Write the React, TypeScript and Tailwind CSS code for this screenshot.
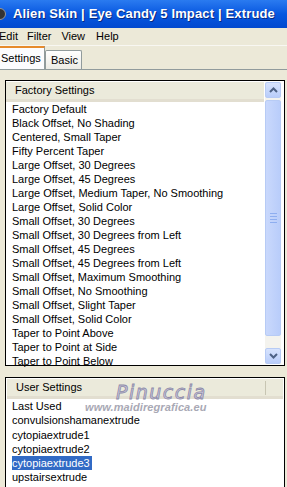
import React from "react";

const factory = [
  "Factory Default",
  "Black Offset, No Shading",
  "Centered, Small Taper",
  "Fifty Percent Taper",
  "Large Offset, 30 Degrees",
  "Large Offset, 45 Degrees",
  "Large Offset, Medium Taper, No Smoothing",
  "Large Offset, Solid Color",
  "Small Offset, 30 Degrees",
  "Small Offset, 30 Degrees from Left",
  "Small Offset, 45 Degrees",
  "Small Offset, 45 Degrees from Left",
  "Small Offset, Maximum Smoothing",
  "Small Offset, No Smoothing",
  "Small Offset, Slight Taper",
  "Small Offset, Solid Color",
  "Taper to Point Above",
  "Taper to Point at Side",
  "Taper to Point Below",
];

const user = [
  "Last Used",
  "convulsionshamanextrude",
  "cytopiaextrude1",
  "cytopiaextrude2",
  "cytopiaextrude3",
  "upstairsextrude",
];

function Chevron({ up }: { up?: boolean }) {
  return (
    <svg width="9" height="6" viewBox="0 0 9 6">
      <path
        d={up ? "M1 5 L4.5 1.5 L8 5" : "M1 1 L4.5 4.5 L8 1"}
        fill="none"
        stroke="#4d6185"
        strokeWidth="2"
      />
    </svg>
  );
}

function ScrollBtn({ up }: { up?: boolean }) {
  return (
    <div className="w-[16px] h-[16px] rounded-[2px] border border-[#b7cbf5] bg-gradient-to-b from-[#d7e3fd] to-[#b9cdfa] flex items-center justify-center">
      <Chevron up={up} />
    </div>
  );
}

export default function App() {
  return (
    <div
      className="w-[287px] h-[487px] overflow-hidden bg-[#ece9d8] text-black"
      style={{ fontFamily: "'Liberation Sans', Arial, sans-serif" }}
    >
      {/* Title bar */}
      <div className="relative h-[28px] bg-gradient-to-b from-[#2a7bf0] via-[#0757e0] to-[#0249cf] flex items-center">
        <div className="absolute left-[-6px] top-[8px] w-[12px] h-[12px] rounded-full bg-[#333] border border-[#999]" />
        <span
          className="ml-[13px] text-white font-bold text-[13px] tracking-[0.15px] whitespace-nowrap"
          style={{ textShadow: "1px 1px 0 #0a2a80" }}
        >
          Alien Skin | Eye Candy 5 Impact | Extrude
        </span>
      </div>
      {/* Menu bar */}
      <div className="h-[18px] flex items-center text-[11px] border-b border-[#f8f7f2]">
        <span className="ml-[-1px]">Edit</span>
        <span className="ml-[9px]">Filter</span>
        <span className="ml-[10px]">View</span>
        <span className="ml-[11px]">Help</span>
      </div>
      {/* Tabs */}
      <div className="h-[24px] flex items-end border-b border-[#919b9c] text-[11px]">
        <div className="h-[23px] w-[45px] bg-[#fcfcfe] border-t-2 border-[#e68b2c] border-r border-r-[#919b9c] flex items-center pl-[1px]">
          Settings
        </div>
        <div className="h-[19px] w-[37px] bg-gradient-to-b from-[#ffffff] to-[#ecebe5] border border-[#919b9c] border-b-0 rounded-t-[2px] flex items-center pl-[5px]">
          Basic
        </div>
      </div>

      {/* Factory settings panel */}
      <div className="ml-[5px] mt-[10px] w-[280px] h-[286px] border border-black bg-white flex">
        <div className="flex-1 flex flex-col">
          <div className="h-[20px] bg-[#ebeadb] border-b-[3px] border-[#e2ded0] mt-[1px] mr-[1px] flex items-center pl-[9px] text-[11px]">
            Factory Settings
          </div>
          <div className="flex flex-col pl-[6px] text-[11px]">
            {factory.map((f) => (
              <div key={f} className="h-[14.05px] leading-[14px] whitespace-nowrap">
                {f}
              </div>
            ))}
          </div>
        </div>
        <div className="w-[16px] mt-[1px] mr-[3px] mb-[1px] flex flex-col bg-[#f4f3ee]">
          <ScrollBtn up />
          <div className="mt-[2px] h-[236px] rounded-[2px] border border-[#b7cbf5] bg-gradient-to-r from-[#c9d8fc] to-[#b9cdfa] flex flex-col items-center justify-center gap-[2px]">
            <div className="w-[7px] h-[1px] bg-[#8eaef0]" />
            <div className="w-[7px] h-[1px] bg-[#8eaef0]" />
            <div className="w-[7px] h-[1px] bg-[#8eaef0]" />
            <div className="w-[7px] h-[1px] bg-[#8eaef0]" />
          </div>
          <div className="flex-1" />
          <ScrollBtn />
        </div>
      </div>

      {/* User settings panel */}
      <div className="relative ml-[5px] mt-[11px] w-[280px] h-[120px] border border-black bg-white">
        <div className="h-[20px] bg-[#ebeadb] border-b-[3px] border-[#e2ded0] mt-[1px] mx-[1px] flex items-center pl-[9px] text-[11px] relative">
          User Settings
          <div className="absolute left-[258px] top-[2px] w-[1px] h-[14px] bg-[#c7c5b2]" />
        </div>
        <div className="flex flex-col pl-[6px] text-[11px] items-start">
          {user.map((u) => (
            <div
              key={u}
              className={
                "h-[14.3px] leading-[14px] whitespace-nowrap pr-[2px] " +
                (u === "cytopiaextrude3" ? "bg-[#316ac5] text-white" : "")
              }
            >
              {u}
            </div>
          ))}
        </div>
        <div
          className="absolute left-[110px] top-[0px] text-[19px] italic text-[#c9c6dc] tracking-[1.5px]"
          style={{ fontFamily: "'DejaVu Sans', sans-serif", WebkitTextStroke: "0.8px #8d8aa8" }}
        >
          Pinuccia
        </div>
        <div className="absolute left-[79px] top-[21px] text-[11px] italic font-bold text-[#a9a9b5] tracking-[0.1px]">
          www.maidiregrafica.eu
        </div>
      </div>
    </div>
  );
}
